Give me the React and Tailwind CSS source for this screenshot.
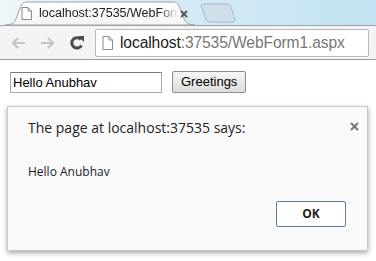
import React from "react";

function TabShape() {
  return (
    <svg className="absolute inset-0" width="195" height="25" viewBox="0 0 195 25">
      <defs>
        <linearGradient id="tg" x1="0" y1="0" x2="0" y2="1">
          <stop offset="0" stopColor="#ffffff" />
          <stop offset="1" stopColor="#f4f4f4" />
        </linearGradient>
      </defs>
      <path d="M0 25 C8 25 10 22 12 16 L16 6 C18 2 20 2 25 2 L165 2 C170 2 172 2 174 6 L178 16 C180 22 182 25 190 25 Z" fill="url(#tg)" stroke="#9aa3ab" strokeWidth="1" />
    </svg>
  );
}

export default function App() {
  return (
    <div className="w-[376px] h-[261px] overflow-hidden bg-white" style={{ fontFamily: '"Liberation Sans", Arial, sans-serif' }}>
      {/* title / tab strip */}
      <div className="relative h-[25px] bg-gradient-to-r from-[#eef6fa] via-[#d3eaf5] to-[#c3e3f2]">
        <div className="absolute left-[5px] top-0 w-[195px] h-[25px]">
          <TabShape />
          <div className="relative flex items-center h-[25px] pt-[2px] pl-[16px]">
            <svg width="11" height="13" viewBox="0 0 11 13" className="shrink-0">
              <path d="M1 .5 H7 L10.5 4 V12.5 H1 Z M7 .5 V4 H10.5" fill="#fff" stroke="#8a8a8a" strokeWidth="1" />
            </svg>
            <span className="ml-[7px] text-[12.5px] text-[#222] whitespace-nowrap w-[139px] overflow-hidden" style={{ WebkitMaskImage: "linear-gradient(to right, black 86%, transparent)" }}>localhost:37535/WebForm1.aspx</span>
            <svg width="8" height="8" viewBox="0 0 8 8" className="ml-[2px]"><path d="M1 1 L7 7 M7 1 L1 7" stroke="#555" strokeWidth="1.8" /></svg>
          </div>
        </div>
        <svg className="absolute left-[197px] top-[3px]" width="40" height="20" viewBox="0 0 40 20">
          <path d="M4 2 C5 1 6 1 8 1 L30 1 C32 1 33 2 34 4 L38 17 C38 18 37 19 35 19 L13 19 C11 19 10 18 9 16 Z" fill="#cfe0ea" stroke="#a5b8c4" strokeWidth="1" />
        </svg>
      </div>
      {/* toolbar */}
      <div className="h-[35px] bg-[#f3f3f3] border-b border-[#9a9a9a] border-t border-t-[#9aa3ab] flex items-center">
        <div className="w-[30px] flex justify-center ml-[3px]">
          <svg width="16" height="14" viewBox="0 0 16 14"><path d="M15 7 H3 M8 2 L3 7 L8 12" fill="none" stroke="#c6c6c6" strokeWidth="2.2" /></svg>
        </div>
        <div className="w-[30px] flex justify-center">
          <svg width="16" height="14" viewBox="0 0 16 14"><path d="M1 7 H13 M8 2 L13 7 L8 12" fill="none" stroke="#c6c6c6" strokeWidth="2.2" /></svg>
        </div>
        <div className="w-[28px] flex justify-center">
          <svg width="16" height="16" viewBox="0 0 16 16">
            <path d="M12.5 10.5 A5.2 5.2 0 1 1 12 4.5" fill="none" stroke="#4a4a4a" strokeWidth="3" />
            <path d="M9 1 L15 1 L15 7 Z" fill="#4a4a4a" />
          </svg>
        </div>
        <div className="ml-[4px] w-[274px] h-[28px] bg-white border border-[#b9b9b9] rounded-[2px] flex items-center pl-[6px]">
          <svg width="11" height="14" viewBox="0 0 11 14" className="shrink-0">
            <path d="M1 .5 H7 L10.5 4 V13.5 H1 Z M7 .5 V4 H10.5" fill="#fff" stroke="#8a8a8a" strokeWidth="1" />
          </svg>
          <span className="ml-[7px] text-[15.6px] leading-none whitespace-nowrap tracking-[-0.1px]">
            <span className="text-[#222]">localhost</span><span className="text-[#777]">:37535/WebForm1.aspx</span>
          </span>
        </div>
      </div>
      {/* page */}
      <div className="relative">
        <div className="flex items-center pt-[11px] pl-[10px]">
          <input
            readOnly
            value="Hello Anubhav"
            className="w-[152px] h-[21px] border border-[#a9a9a9] border-t-[#7a7a7a] px-[2px] text-[13px] text-black outline-none"
            style={{ fontFamily: '"Liberation Sans", Arial, sans-serif' }}
          />
          <button className="ml-[10px] h-[22px] px-[8px] text-[13px] text-black border border-[#8c8c8c] rounded-[2px] bg-gradient-to-b from-[#f6f6f6] to-[#dcdcdc]" style={{ fontFamily: '"Liberation Sans", Arial, sans-serif' }}>
            Greetings
          </button>
        </div>
        {/* dialog */}
        <div className="absolute left-[7px] top-[46px] w-[361px] h-[145px] bg-[#fafafa] border border-[#c8c8c8] shadow-[0_2px_5px_rgba(0,0,0,0.35)]" style={{ fontFamily: '"Open Sans", "Noto Sans", sans-serif' }}>
          <div className="flex justify-between pl-[20px] pr-[8px] pt-[10px]">
            <div className="text-[14px] text-[#222]">The page at localhost:37535 says:</div>
            <svg width="9" height="9" viewBox="0 0 9 9" className="mt-[5px]"><path d="M1 1 L8 8 M8 1 L1 8" stroke="#777" strokeWidth="2" /></svg>
          </div>
          <div className="pl-[20px] pt-[25px] text-[12px] text-[#1a1a2a]">Hello Anubhav</div>
          <div className="flex justify-end pr-[21px] pt-[20px]">
            <button className="w-[70px] h-[26px] border border-[#5a7fa8] rounded-[2px] bg-white text-[12px] font-bold text-[#222]">OK</button>
          </div>
        </div>
      </div>
    </div>
  );
}
